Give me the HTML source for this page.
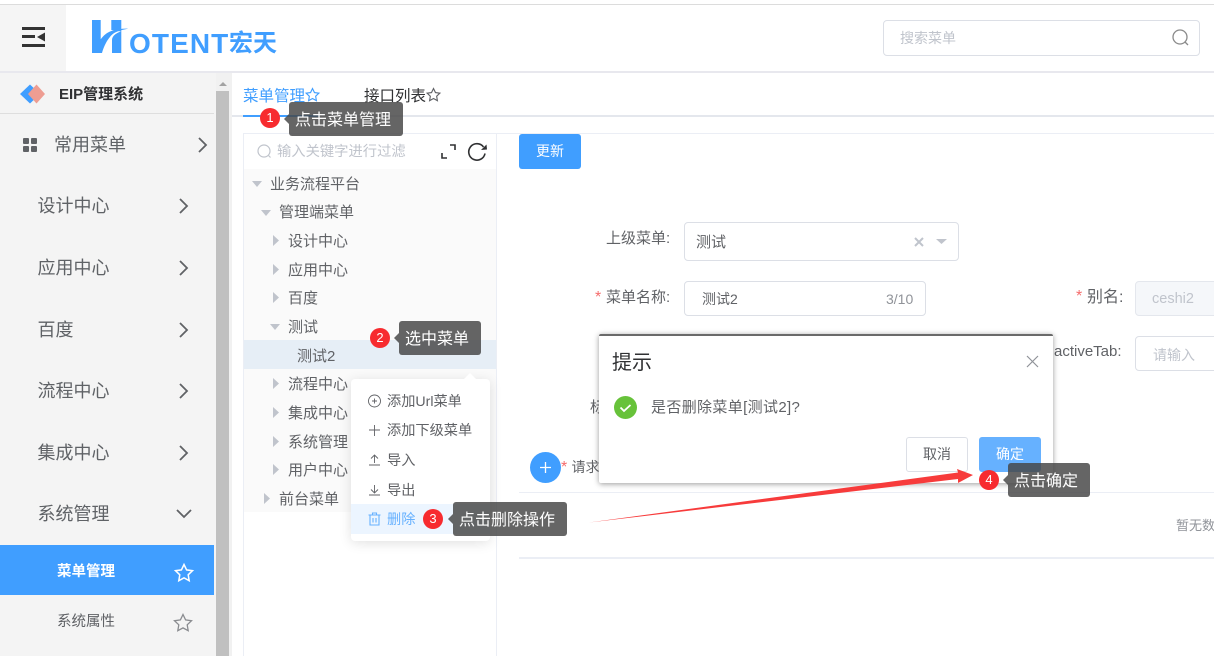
<!DOCTYPE html>
<html lang="zh"><head><meta charset="utf-8"><title>EIP</title>
<style>
html,body{margin:0;padding:0;width:1214px;height:656px;overflow:hidden;background:#fff;font-family:"Liberation Sans","Noto Sans CJK SC",sans-serif;color:#606266}
.a{position:absolute;box-sizing:border-box}
.t{position:absolute;white-space:nowrap;height:20px;line-height:20px}
.m{font-size:18px;color:#5f6266;left:37.500px}
.tr{font-size:15px;color:#606266}
.c{font-size:14.200px;color:#606266;left:387px}
.lab{font-size:15px;color:#606266}
.tip{position:absolute;box-sizing:border-box;background:rgba(70,70,70,.83);border-radius:3px;color:#fff;font-size:16px;height:34px;line-height:37px;padding-left:6px;white-space:nowrap}
.tip:before{content:"";position:absolute;left:-5px;top:12px;border:5px solid transparent;border-left:0;border-right-color:rgba(70,70,70,.83)}
.b{position:absolute;width:20px;height:20px;border-radius:50%;background:#f72b2f;color:#fff;font-size:13px;line-height:20px;text-align:center}
.inp{position:absolute;box-sizing:border-box;border:1px solid #dcdfe6;border-radius:4px;background:#fff}
svg{position:absolute;overflow:visible}
</style></head><body>
<div class="a" style="left:0;top:4px;width:1214px;height:1px;background:#dcdcdc"></div>
<div class="a" style="left:0;top:5px;width:66px;height:66px;background:#f5f5f5"></div>
<svg style="left:22px;top:27px" width="23" height="20" fill="#333"><rect width="23" height="3"/><rect y="8" width="13" height="3"/><rect y="17" width="23" height="3"/><path d="M23 5.500v9l-8-4.500z"/></svg>
<svg style="left:92px;top:20px" width="40" height="34" fill="#409eff"><path d="M0 0H8.700V19.300C12 15 15 12.500 19.300 11C25 9 31 8.500 36 8.700C31 9.500 26 11 22.700 12.700C19 14.500 13 22 10 33H0z"/><path d="M19.300 0H29.300V33H20V20C20 18 21 16 23 14.500C25 13 27 12 29 11.500L19.300 10z"/></svg>
<div class="t" style="left:129px;top:28px;height:32px;line-height:32px;font-size:28px;font-weight:700;color:#409eff;letter-spacing:1.100px">OTENT</div>
<div class="t" style="left:229px;top:28px;height:32px;line-height:32px;font-size:24px;font-weight:700;color:#409eff">宏天</div>
<div class="inp" style="left:883px;top:20px;width:317px;height:36px"></div>
<div class="t" style="left:900px;top:28px;font-size:14px;color:#c0c4cc">搜索菜单</div>
<svg style="left:1172px;top:29px" width="17" height="17" fill="none" stroke="#8a8a8a" stroke-width="1.300"><circle cx="8" cy="8" r="7"/><path d="M13 13l3 3"/></svg>
<div class="a" style="left:0;top:71px;width:1214px;height:2px;background:#e8e8ee"></div>

<!-- sidebar -->
<div class="a" style="left:0;top:73px;width:216px;height:583px;background:#f4f4f4"></div>
<div class="a" style="left:216px;top:73px;width:16px;height:583px;background:#f1f1f1"></div>
<div class="a" style="left:216px;top:91px;width:13px;height:565px;background:#c0c0c0"></div>
<div class="a" style="left:219px;top:82px;border:4px solid transparent;border-top:0;border-bottom:4px solid #a3a3a3"></div>
<svg style="left:20px;top:84px" width="26" height="20"><path fill="#409eff" d="M0 10l10-9.500 10 9.500-10 9.500z"/><path fill="#ee9d92" d="M8 10l8.500-9.500L25 10l-8.500 9.500z"/></svg>
<div class="t" style="left:59px;top:85px;font-size:15px;font-weight:700;color:#303133">EIP管理系统</div>
<div class="a" style="left:0;top:113px;width:214px;height:1px;background:#dedede"></div>
<svg style="left:23px;top:138px" width="14" height="14" fill="#606266"><rect width="6" height="6" rx="1"/><rect x="8" width="6" height="6" rx="1"/><rect y="8" width="6" height="6" rx="1"/><rect x="8" y="8" width="6" height="6" rx="1"/></svg>
<div class="t m" style="left:54px;top:135px">常用菜单</div>
<div class="t m" style="top:196px">设计中心</div>
<div class="t m" style="top:258px">应用中心</div>
<div class="t m" style="top:320px">百度</div>
<div class="t m" style="top:381px">流程中心</div>
<div class="t m" style="top:443px">集成中心</div>
<div class="t m" style="top:504px">系统管理</div>
<svg style="left:0;top:0" width="214" height="656" fill="none" stroke="#606266" stroke-width="1.800"><path d="M199 138l7 7-7 7M180 199l7 7-7 7M180 261l7 7-7 7M180 323l7 7-7 7M180 384l7 7-7 7M180 446l7 7-7 7M177 510l7 7 7-7"/></svg>
<div class="a" style="left:0;top:545px;width:214px;height:50px;background:#409eff"></div>
<div class="t" style="left:57px;top:562px;font-size:14.500px;font-weight:700;color:#fff">菜单管理</div>
<svg style="left:174px;top:563px" width="20" height="19" viewBox="0 0 20 19" fill="none" stroke="#fff" stroke-width="1.500"><path d="M10 1.500l2.600 5.400 5.900.8-4.300 4.100 1 5.900L10 14.900l-5.200 2.800 1-5.900L1.500 7.700l5.900-.8z"/></svg>
<div class="t" style="left:57px;top:612px;font-size:14.500px;color:#606266">系统属性</div>
<svg style="left:173px;top:613px" width="20" height="19" viewBox="0 0 20 19" fill="none" stroke="#8a8c90" stroke-width="1.300"><path d="M10 1.500l2.600 5.400 5.900.8-4.300 4.100 1 5.900L10 14.900l-5.200 2.800 1-5.900L1.500 7.700l5.900-.8z"/></svg>

<!-- tabs -->
<div class="t" style="left:243px;top:87px;font-size:15.500px;color:#409eff">菜单管理</div>
<svg style="left:305px;top:87px" width="15" height="15" viewBox="0 0 20 19" fill="none" stroke="#409eff" stroke-width="1.500"><path d="M10 1.500l2.600 5.400 5.900.8-4.300 4.100 1 5.900L10 14.900l-5.200 2.800 1-5.900L1.500 7.700l5.900-.8z"/></svg>
<div class="t" style="left:364px;top:87px;font-size:15.500px;color:#303133">接口列表</div>
<svg style="left:426px;top:87px" width="15" height="15" viewBox="0 0 20 19" fill="none" stroke="#606266" stroke-width="1.500"><path d="M10 1.500l2.600 5.400 5.900.8-4.300 4.100 1 5.900L10 14.900l-5.200 2.800 1-5.900L1.500 7.700l5.900-.8z"/></svg>
<div class="a" style="left:232px;top:115px;width:982px;height:2px;background:#e4e7ed"></div>
<div class="a" style="left:243px;top:115px;width:77px;height:2px;background:#409eff"></div>

<!-- tree -->
<div class="a" style="left:243px;top:133px;width:971px;height:1px;background:#ebeef5"></div>
<div class="a" style="left:243px;top:133px;width:1px;height:523px;background:#ebeef5"></div>
<div class="a" style="left:496px;top:133px;width:1px;height:523px;background:#ebeef5"></div>
<svg style="left:257px;top:144px" width="15" height="15" fill="none" stroke="#c0c4cc" stroke-width="1.200"><circle cx="7" cy="7" r="6"/><path d="M11.500 11.500l2 2"/></svg>
<div class="t" style="left:277px;top:142px;font-size:14.300px;color:#c0c4cc">输入关键字进行过滤</div>
<svg style="left:441px;top:144px" width="46" height="16" fill="none" stroke="#303133" stroke-width="1.600"><path d="M9 1h5v5M1 9v5h5"/><path d="M42.500 3A8.200 8.200 0 1 0 44 9.500"/><path fill="#303133" stroke="none" d="M40 6l6-.5-.5-5z"/></svg>
<div class="a" style="left:244px;top:169px;width:252px;height:343px;background:#fafafa"></div>
<div class="a" style="left:244px;top:340px;width:252px;height:29px;background:#e6eef6"></div>
<svg style="left:0;top:0" width="300" height="520" fill="#c0c4cc"><path d="M252 181h10l-5 6zM261 210h10l-5 6zM270 324h10l-5 6z"/><path d="M273 235v11l6-5.500zM273 264v11l6-5.500zM273 292v11l6-5.500zM273 378v11l6-5.500zM273 407v11l6-5.500zM273 436v11l6-5.500zM273 464v11l6-5.500zM264 493v11l6-5.500z"/></svg>
<div class="t tr" style="left:270px;top:175px">业务流程平台</div>
<div class="t tr" style="left:279px;top:203px">管理端菜单</div>
<div class="t tr" style="left:288px;top:232px">设计中心</div>
<div class="t tr" style="left:288px;top:261px">应用中心</div>
<div class="t tr" style="left:288px;top:289px">百度</div>
<div class="t tr" style="left:288px;top:318px">测试</div>
<div class="t tr" style="left:297px;top:347px">测试2</div>
<div class="t tr" style="left:288px;top:375px">流程中心</div>
<div class="t tr" style="left:288px;top:404px">集成中心</div>
<div class="t tr" style="left:288px;top:433px">系统管理</div>
<div class="t tr" style="left:288px;top:461px">用户中心</div>
<div class="t tr" style="left:279px;top:490px">前台菜单</div>

<!-- form -->
<div class="a" style="left:519px;top:134px;width:62px;height:35px;background:#409eff;border-radius:3px;color:#fff;font-size:14px;line-height:35px;text-align:center">更新</div>
<div class="t lab" style="left:606px;top:229px">上级菜单:</div>
<div class="inp" style="left:684px;top:222px;width:275px;height:39px"></div>
<div class="t" style="left:696px;top:233px;font-size:15px;color:#606266">测试</div>
<svg style="left:914px;top:236px" width="36" height="12" fill="none" stroke="#c0c4cc" stroke-width="2"><path d="M1 2l8 8M9 2l-8 8"/><path fill="#c0c4cc" stroke="none" d="M22 3h11l-5.500 5z"/></svg>
<div class="t lab" style="left:606px;top:288px">菜单名称:</div>
<div class="t" style="left:595px;top:288px;font-size:16px;color:#f56c6c">*</div>
<div class="inp" style="left:684px;top:281px;width:242px;height:35px"></div>
<div class="t" style="left:702px;top:289px;font-size:14px;color:#606266">测试2</div>
<div class="t" style="left:886px;top:289px;font-size:14px;color:#909399">3/10</div>
<div class="t" style="left:1076px;top:287px;font-size:16px;color:#f56c6c">*</div>
<div class="t lab" style="left:1087px;top:288px;font-size:16px">别名:</div>
<div class="a" style="left:1135px;top:281px;width:90px;height:35px;background:#f5f7fa;border:1px solid #e4e7ed;border-radius:4px"></div>
<div class="t" style="left:1152px;top:289px;font-size:14.500px;color:#c0c4cc">ceshi2</div>
<div class="t lab" style="left:1054px;top:342px">activeTab:</div>
<div class="inp" style="left:1135px;top:336px;width:90px;height:35px"></div>
<div class="t" style="left:1153px;top:345px;font-size:14px;color:#c0c4cc">请输入</div>
<div class="t lab" style="left:590px;top:398px">标</div>
<div class="a" style="left:530px;top:452px;width:31px;height:31px;border-radius:50%;background:#409eff"></div>
<svg style="left:539px;top:461px" width="13" height="13" stroke="#fff" stroke-width="1.300"><path d="M6.500 1v11M1 6.500h11"/></svg>
<div class="t" style="left:561px;top:458px;font-size:16px;color:#f56c6c">*</div>
<div class="t" style="left:571.500px;top:457px;font-size:14px;color:#606266">请求</div>
<div class="a" style="left:519px;top:492px;width:695px;height:1px;background:#ebeef5"></div>
<div class="a" style="left:519px;top:557px;width:695px;height:2px;background:#ebeef5"></div>
<div class="t" style="left:1176px;top:516px;font-size:13px;color:#909399">暂无数据</div>

<!-- context menu -->
<div class="a" style="left:351px;top:379px;width:139px;height:162px;background:#fff;border-radius:4px;box-shadow:0 2px 12px rgba(0,0,0,.12)"></div>
<div class="a" style="left:464px;top:373px;border:6px solid transparent;border-top:0;border-bottom:6px solid #fff"></div>
<div class="a" style="left:351px;top:504px;width:139px;height:30px;background:#ecf5ff"></div>
<svg style="left:0;top:0" width="500" height="540" fill="none" stroke="#606266" stroke-width=".9"><circle cx="374.500" cy="401" r="6"/><path d="M374.500 398.500v5M372 401h5M374.500 425v11M369 430h11M369 465h11M374.500 463v-8M371 458.500l3.500-3.500 3.500 3.500M369 495h11M374.500 485v8M371 489.500l3.500 3.500 3.500-3.500"/><path stroke="#66b1ff" stroke-width="1.100" d="M368.500 515h12M372.500 515v-2h4v2M370 515v10h9v-10M373 518v4.500M376 518v4.500"/></svg>
<div class="t c" style="top:392px">添加Url菜单</div>
<div class="t c" style="top:421px">添加下级菜单</div>
<div class="t c" style="top:451px">导入</div>
<div class="t c" style="top:481px">导出</div>
<div class="t c" style="top:510px;color:#66b1ff">删除</div>

<!-- dialog -->
<div class="a" style="left:599px;top:334px;width:454px;height:149px;background:#fff;border-top:2px solid #6a6a6a;border-radius:2px;box-shadow:0 1px 6px rgba(0,0,0,.4)"></div>
<div class="t" style="left:612px;top:353px;font-size:20px;color:#303133">提示</div>
<svg style="left:1027px;top:356px" width="11" height="11" stroke="#909399" stroke-width="1.200"><path d="M0 0l11 11M11 0L0 11"/></svg>
<svg style="left:614px;top:396px" width="23" height="23"><circle cx="11.500" cy="11.500" r="11.500" fill="#67c23a"/><path d="M6.500 11.500l3.500 3.500 6.500-6" fill="none" stroke="#fff" stroke-width="1.800"/></svg>
<div class="t" style="left:651px;top:398px;font-size:15px;letter-spacing:.35px;color:#606266">是否删除菜单[测试2]?</div>
<div class="a" style="left:906px;top:437px;width:62px;height:35px;border:1px solid #dcdfe6;border-radius:3px;background:#fff;font-size:14px;line-height:33px;text-align:center;color:#606266">取消</div>
<div class="a" style="left:979px;top:437px;width:62px;height:35px;border-radius:3px;background:#66b1ff;font-size:14px;line-height:35px;text-align:center;color:#fff">确定</div>

<!-- red arrow -->
<svg style="left:0;top:0" width="1214" height="656"><path fill="#f73b3b" d="M589 522.500L958 472.500 957 469 973 475 958 483 958 479z"/></svg>

<!-- tooltips -->
<div class="tip" style="left:289px;top:102px;width:114px">点击菜单管理</div>
<div class="b" style="left:260px;top:108px">1</div>
<div class="tip" style="left:399px;top:321px;width:82px">选中菜单</div>
<div class="b" style="left:370px;top:328px">2</div>
<div class="tip" style="left:453px;top:502px;width:114px">点击删除操作</div>
<div class="b" style="left:423px;top:509px">3</div>
<div class="tip" style="left:1008px;top:463px;width:82px">点击确定</div>
<div class="b" style="left:979px;top:470px">4</div>
</body></html>
